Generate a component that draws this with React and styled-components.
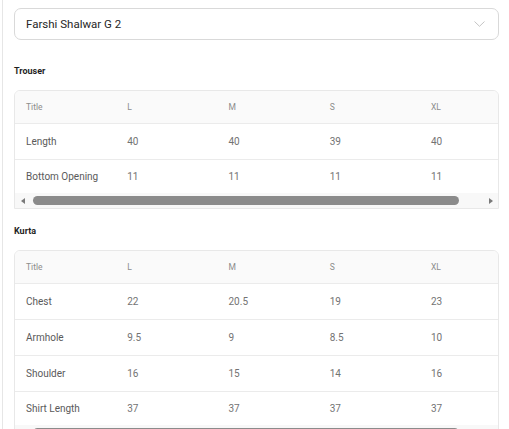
import React from "react";
import styled, { createGlobalStyle } from "styled-components";

const Global = createGlobalStyle`
  html, body { margin: 0; padding: 0; background: #fff; }
  body { font-family: Roboto, "Noto Sans", Arial, sans-serif; }
  * { box-sizing: border-box; }
`;

const Page = styled.div`
  margin-left: 2px;
  border-left: 1px solid #e6e6e6;
  min-height: 429px;
  padding: 8px 10px 0 11px;
  display: flex;
  flex-direction: column;
`;

const Select = styled.div`
  height: 32px;
  border: 1px solid #d9d9d9;
  border-radius: 7px;
  display: flex;
  align-items: center;
  justify-content: space-between;
  padding: 0 13px 0 11px;
  font-size: 11.5px;
  color: #262626;
`;

const SectionTitle = styled.div`
  font-size: 9px;
  font-weight: 700;
  line-height: 12px;
  color: #1f1f1f;
  margin: ${(p) => p.$top}px 0 13px;
`;

const TableWrap = styled.div`
  border: 1px solid #e8e8e8;
  border-radius: 6px 6px 0 0;
  overflow: hidden;
  flex-shrink: 0;
`;

const Grid = styled.div`
  width: 506px;
  display: grid;
  grid-template-columns: repeat(5, 101.25px);
`;

const Cell = styled.div`
  height: ${(p) => (p.$head ? 33 : p.$last ? 33 : 36)}px;
  display: flex;
  align-items: center;
  padding-left: 11px;
  background: ${(p) => (p.$head ? "#fafafa" : "#fff")};
  border-bottom: ${(p) => (p.$last ? "none" : "1px solid #ebebeb")};
  font-size: ${(p) => (p.$head ? "8.5px" : "10px")};
  color: ${(p) => (p.$head ? "#8c8c8c" : p.$first ? "#5a5a5a" : "#737373")};
  white-space: nowrap;
`;

const ScrollBar = styled.div`
  height: 15px;
  display: flex;
  align-items: center;
  background: #f8f8f8;
`;

const Arrow = styled.div`
  width: 15px;
  height: 15px;
  display: flex;
  align-items: center;
  justify-content: center;
  &::before {
    content: "";
    width: 0;
    height: 0;
    border-top: 3.5px solid transparent;
    border-bottom: 3.5px solid transparent;
    ${(p) =>
      p.$dir === "left"
        ? "border-right: 4px solid #7a7a7a;"
        : "border-left: 4px solid #7a7a7a;"}
  }
`;

const Track = styled.div`
  flex: 1;
  height: 15px;
  display: flex;
  align-items: center;
`;

const Thumb = styled.div`
  flex: 1;
  height: 9px;
  margin: 0 24px 0 3px;
  border-radius: 5px;
  background: #8b8b8b;
`;

const Chevron = () => (
  <svg width="11" height="6" viewBox="0 0 11 6" fill="none">
    <path d="M0.5 0.5 L5.5 5.3 L10.5 0.5" stroke="#c4c4c4" strokeWidth="1" />
  </svg>
);

const cols = ["Title", "L", "M", "S", "XL"];

function SizeTable({ rows }) {
  return (
    <TableWrap>
      <Grid>
        {cols.map((c) => (
          <Cell key={c} $head>
            {c}
          </Cell>
        ))}
        {rows.map((r, i) =>
          r.map((v, j) => (
            <Cell key={i + "-" + j} $first={j === 0} $last={i === rows.length - 1}>
              {v}
            </Cell>
          ))
        )}
      </Grid>
      <ScrollBar>
        <Arrow $dir="left" />
        <Track>
          <Thumb />
        </Track>
        <Arrow $dir="right" />
      </ScrollBar>
    </TableWrap>
  );
}

export default function App() {
  return (
    <>
      <Global />
      <Page>
        <Select>
          <span>Farshi Shalwar G 2</span>
          <Chevron />
        </Select>
        <SectionTitle $top={25}>Trouser</SectionTitle>
        <SizeTable
          rows={[
            ["Length", "40", "40", "39", "40"],
            ["Bottom Opening", "11", "11", "11", "11"],
          ]}
        />
        <SectionTitle $top={16}>Kurta</SectionTitle>
        <SizeTable
          rows={[
            ["Chest", "22", "20.5", "19", "23"],
            ["Armhole", "9.5", "9", "8.5", "10"],
            ["Shoulder", "16", "15", "14", "16"],
            ["Shirt Length", "37", "37", "37", "37"],
          ]}
        />
      </Page>
    </>
  );
}
